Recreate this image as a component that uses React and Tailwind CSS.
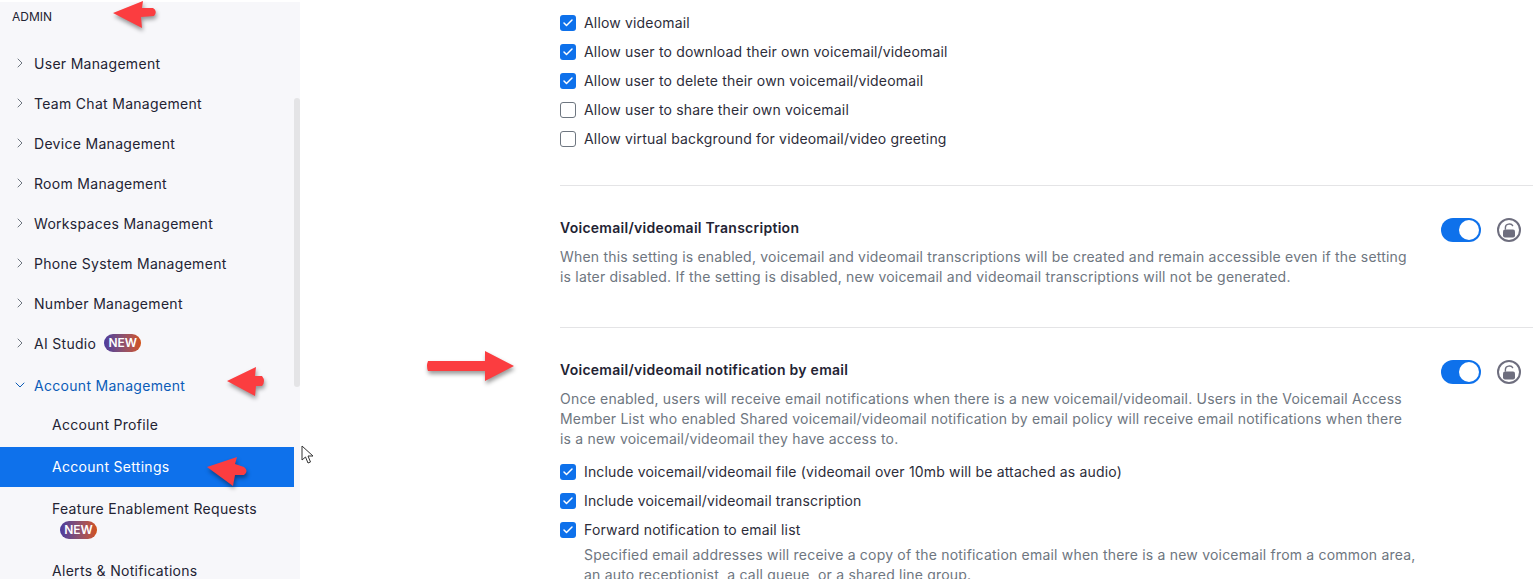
import { ChevronRight, ChevronDown, Check } from 'lucide-react';

const menuItems = [
  'User Management',
  'Team Chat Management',
  'Device Management',
  'Room Management',
  'Workspaces Management',
  'Phone System Management',
  'Number Management',
];

function NewBadge() {
  return (
    <span className="flex items-center justify-center w-[37px] h-[18px] rounded-full bg-gradient-to-r from-[#4c3a9e] to-[#d2500f] text-white text-[12px] font-semibold leading-none tracking-normal">
      NEW
    </span>
  );
}

function MenuRow({ label }) {
  return (
    <div className="flex items-center h-10 pl-3 text-[#232333]">
      <ChevronRight className="w-4 h-4 text-[#6e7680] mr-[6px]" strokeWidth={1.5} />
      <span>{label}</span>
    </div>
  );
}

function Checkbox({ checked, label }) {
  return (
    <div className="flex items-center h-[29px] text-[#2d2d3a] tracking-[0.17px]">
      {checked ? (
        <span className="w-4 h-4 rounded-[3px] bg-[#0e71eb] flex items-center justify-center mr-2 shrink-0">
          <Check className="w-3 h-3 text-white" strokeWidth={3} />
        </span>
      ) : (
        <span className="w-4 h-4 rounded-[3px] border border-[#6e7680] bg-white mr-2 shrink-0" />
      )}
      <span>{label}</span>
    </div>
  );
}

function Toggle() {
  return (
    <div className="flex items-center gap-4 shrink-0 self-start">
      <span className="w-10 h-6 rounded-full bg-[#0e71eb] flex items-center justify-end pr-[2px]">
        <span className="w-5 h-5 rounded-full bg-white" />
      </span>
      <span className="w-6 h-6 rounded-full border-2 border-[#6e6e7e] flex items-center justify-center">
        <svg width="14" height="15" viewBox="0 0 14 15">
          <path d="M3.4 6 V4.4 C3.4 0.6 9.4 0.2 10.6 2.6" fill="none" stroke="#6e6e7e" strokeWidth="1.4" strokeLinecap="round" />
          <rect x="1" y="6.5" width="12" height="8" rx="2" fill="#6e6e7e" />
        </svg>
      </span>
    </div>
  );
}

function RedArrow({ className, d, w, h }) {
  return (
    <svg
      className={`absolute drop-shadow-[1px_3px_2px_rgba(0,0,0,0.4)] ${className}`}
      width={w}
      height={h}
      viewBox={`0 0 ${w} ${h}`}
    >
      <path d={d} fill="#fb3d40" />
    </svg>
  );
}

export default function App() {
  return (
    <div className="relative flex h-[579px] w-[1533px] overflow-hidden bg-white text-[14px] font-['Inter',sans-serif]">
      {/* Sidebar */}
      <div className="relative w-[300px] shrink-0 mt-[2px] bg-[#f7f7fa] tracking-[0.3px]">
        <div className="h-[41px] pl-3 pt-[9px] text-[12px] leading-[12px] text-[#232333] tracking-normal">ADMIN</div>
        {menuItems.map(item => (
          <MenuRow key={item} label={item} />
        ))}
        <div className="flex items-center h-10 pl-3 text-[#232333]">
          <ChevronRight className="w-4 h-4 text-[#6e7680] mr-[6px]" strokeWidth={1.5} />
          <span>AI Studio</span>
          <span className="ml-[8px]"><NewBadge /></span>
        </div>
        <div className="flex items-center h-[44px] pl-3 text-[#0b5cb8]">
          <ChevronDown className="w-4 h-4 mr-[6px]" strokeWidth={1.5} />
          <span>Account Management</span>
        </div>
        <div className="flex items-center h-10 pb-[5px] pl-[52px] text-[#232333]">Account Profile</div>
        <div className="flex items-center h-10 w-[294px] pb-[2px] pl-[52px] bg-[#0e71eb] text-white">Account Settings</div>
        <div className="pl-[52px] pt-[13px] leading-[18px] text-[#232333]">Feature Enablement Requests</div>
        <div className="ml-[60px] h-[18px] mt-[3px]"><NewBadge /></div>
        <div className="pl-[52px] mt-[23px] leading-[18px] text-[#232333]">Alerts &amp; Notifications</div>
        {/* scrollbar */}
        <div className="absolute right-0 top-[96px] w-[6px] h-[289px] rounded-[3px] bg-[#e4e4e6]" />
      </div>

      {/* Main content */}
      <div className="flex-1 pl-[260px] pt-2">
        <Checkbox checked label="Allow videomail" />
        <Checkbox checked label="Allow user to download their own voicemail/videomail" />
        <Checkbox checked label="Allow user to delete their own voicemail/videomail" />
        <Checkbox label="Allow user to share their own voicemail" />
        <Checkbox label="Allow virtual background for videomail/video greeting" />

        <div className="mt-[32px] pt-[32px] h-[142px] border-t border-[#e4e4e6]">
          <div className="flex justify-between pr-3">
            <div className="w-[860px]">
              <div className="font-semibold leading-5 text-[#232333] tracking-[0.27px]">Voicemail/videomail Transcription</div>
              <p className="mt-[9px] leading-5 text-[#6e7680] tracking-[0.2px]">
                When this setting is enabled, voicemail and videomail transcriptions will be created and remain accessible even if the setting<br />
                is later disabled. If the setting is disabled, new voicemail and videomail transcriptions will not be generated.
              </p>
            </div>
            <Toggle />
          </div>
        </div>

        <div className="pt-[32px] border-t border-[#e4e4e6]">
          <div className="flex justify-between pr-3">
            <div className="w-[860px]">
              <div className="font-semibold leading-5 text-[#232333] tracking-[0.27px]">Voicemail/videomail notification by email</div>
              <p className="mt-[9px] leading-5 text-[#6e7680] tracking-[0.2px]">
                Once enabled, users will receive email notifications when there is a new voicemail/videomail. Users in the Voicemail Access<br />
                Member List who enabled Shared voicemail/videomail notification by email policy will receive email notifications when there<br />
                is a new voicemail/videomail they have access to.
              </p>
              <div className="mt-2">
                <Checkbox checked label="Include voicemail/videomail file (videomail over 10mb will be attached as audio)" />
                <Checkbox checked label="Include voicemail/videomail transcription" />
                <Checkbox checked label="Forward notification to email list" />
              </div>
              <p className="pl-6 mt-[1px] leading-5 text-[#6e7680] tracking-[0.2px]">
                Specified email addresses will receive a copy of the notification email when there is a new voicemail from a common area,<br />
                an auto receptionist, a call queue, or a shared line group.
              </p>
            </div>
            <Toggle />
          </div>
        </div>
      </div>

      {/* Annotation arrows */}
      <RedArrow className="left-[113px] top-0" w={46} h={30} d="M0 13 L30 1 L29 8 L40 8 Q45 11 41 16 L28 17 L29 28 Z" />
      <RedArrow className="left-[227px] top-[367px]" w={40} h={32} d="M0 14 L29 0 L28 9 L35 9 Q39 14 35 19 L29 19 L28 29 Z" />
      <RedArrow className="left-[207px] top-[457px]" w={42} h={32} d="M0 10 L30 0 L28 7 L37 10 Q42 14 37 18 L28 18 L26 29 Z" />
      <RedArrow className="left-[427px] top-[351px]" w={88} h={32} d="M1 10 L58 10 L58 0 L87 15 L58 30 L58 20 L1 20 Q-1 15 1 10 Z" />

      {/* Mouse cursor */}
      <svg className="absolute left-[301px] top-[445px]" width="13" height="20" viewBox="0 0 13 20">
        <path d="M1 1 L1 15 L4.5 12 L7 18 L9.5 17 L7 11 L12 11 Z" fill="#fff" stroke="#333" strokeWidth="1" />
      </svg>
    </div>
  );
}
